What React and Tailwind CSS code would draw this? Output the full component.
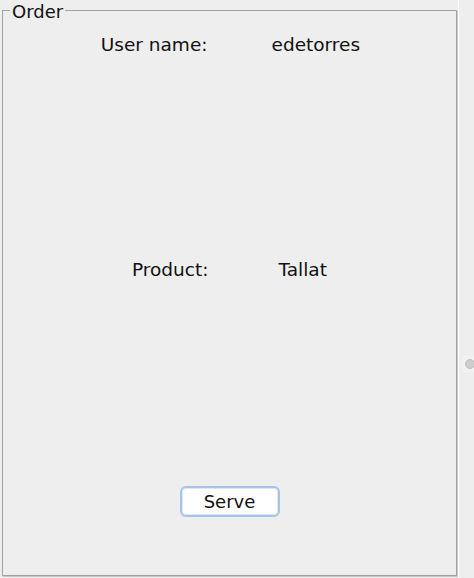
export default function App() {
  return (
    <div
      className="relative flex w-[474px] h-[578px] overflow-hidden bg-[#eeeeee] text-[#111111]"
      style={{ fontFamily: '"DejaVu Sans", "Liberation Sans", sans-serif' }}
    >
      <div className="ml-[2px] mt-[10px] w-[455px] h-[566px] relative border border-[#a2a2a2] shadow-[1px_1px_0_#c8c8c8] flex flex-col items-center">
        <div className="absolute left-[7px] top-[-8px] px-[2px] bg-[#eeeeee] text-[18px] leading-[18px]">
          Order
        </div>
        <div className="mt-[25px] flex gap-[64px] text-[18.5px] leading-[18px]">
          <span className="w-[108px] text-right whitespace-nowrap">User name:</span>
          <span className="w-[88px] whitespace-nowrap">edetorres</span>
        </div>
        <div className="mt-[207px] flex gap-[70px] text-[18.5px] leading-[18px] pl-[2px]">
          <span className="w-[79px] text-right whitespace-nowrap">Product:</span>
          <span className="w-[53px] whitespace-nowrap">Tallat</span>
        </div>
        <button className="mt-[207px] w-[100px] h-[31px] flex items-center justify-center bg-white border-2 border-[#a7c3e6] rounded-[6px] shadow-[inset_0_0_0_1px_#dbe7f5] text-[18px] leading-[18px] text-[#111111]">
          Serve
        </button>
      </div>
      <div className="ml-[1px] flex-1 h-full border-l border-white relative">
        <div className="absolute left-[4px] top-[356px] w-[14px] h-[16px] bg-[#f3f3f3] flex items-center justify-center">
          <div className="w-[10px] h-[10px] rounded-full bg-[#cdcdcd] border border-[#bdbdbd]" />
        </div>
      </div>
    </div>
  );
}
